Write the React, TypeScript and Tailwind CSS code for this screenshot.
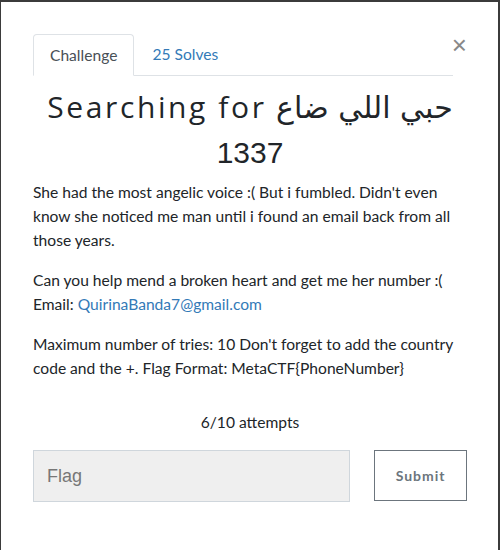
export default function App() {
    return (
        <div className="min-h-[550px] bg-[#3b3b3b] pl-px pr-[2px] pt-[2px]">
            <div className="relative min-h-[548px] bg-white pl-8 pt-8 font-['Lato','Liberation_Sans',sans-serif] text-[#212529]">
                <button className="absolute right-[31px] top-[30px] text-[26px] leading-none text-[#888] font-['Liberation_Sans',sans-serif]">
                    ×
                </button>
                {/* tabs */}
                <div className="flex w-[420px] border-b border-[#dee2e6]">
                    <div className="-mb-px rounded-t-[4px] border border-b-white border-[#dee2e6] px-4 py-[8px] text-[15.6px] leading-6 text-[#495057]">
                        Challenge
                    </div>
                    <div className="py-[8px] pl-[18px] text-[15.6px] leading-6 text-[#337ab7]">25 Solves</div>
                </div>

                <div className="w-[434px]">
                    <h3 className="mt-[13px] text-center font-['DejaVu_Sans',sans-serif] text-[30px] leading-[36px]">
                        <span className="font-['Open_Sans',sans-serif] tracking-[2.6px]">Searching for</span>{" "}
                        حبي اللي ضاع
                    </h3>
                    <h4 className="mt-[9px] text-center font-['Liberation_Sans',sans-serif] text-[30px] leading-[36px]">
                        1337
                    </h4>

                    <div className="mt-[9px] text-[15.6px] leading-6">
                        <p>
                            She had the most angelic voice :( But i fumbled. Didn't even know she noticed me man
                            until i found an email back from all those years.
                        </p>
                        <p className="mt-4">
                            Can you help mend a broken heart and get me her number :(
                            <br />
                            Email: <span className="text-[#337ab7]">QuirinaBanda7@gmail.com</span>
                        </p>
                        <p className="mt-4">
                            Maximum number of tries: 10 Don't forget to add the country code and the +. Flag Format:
                            MetaCTF&#123;PhoneNumber&#125;
                        </p>
                    </div>

                    <p className="mt-[30px] text-center text-[15.6px] leading-6">6/10 attempts</p>
                </div>

                <div className="mt-4 flex w-[434px] items-start gap-6">
                    <input
                        placeholder="Flag"
                        className="h-[52px] w-[318px] border border-[#cfd6dc] bg-[#efefef] px-[13px] font-['Liberation_Sans',sans-serif] text-lg text-[#495057] placeholder:text-[#777]"
                    />
                    <button className="h-[51px] w-[93px] border border-[#6c757d] text-sm font-bold tracking-[1px] text-[#6c757d]">
                        Submit
                    </button>
                </div>
            </div>
        </div>
    );
}
